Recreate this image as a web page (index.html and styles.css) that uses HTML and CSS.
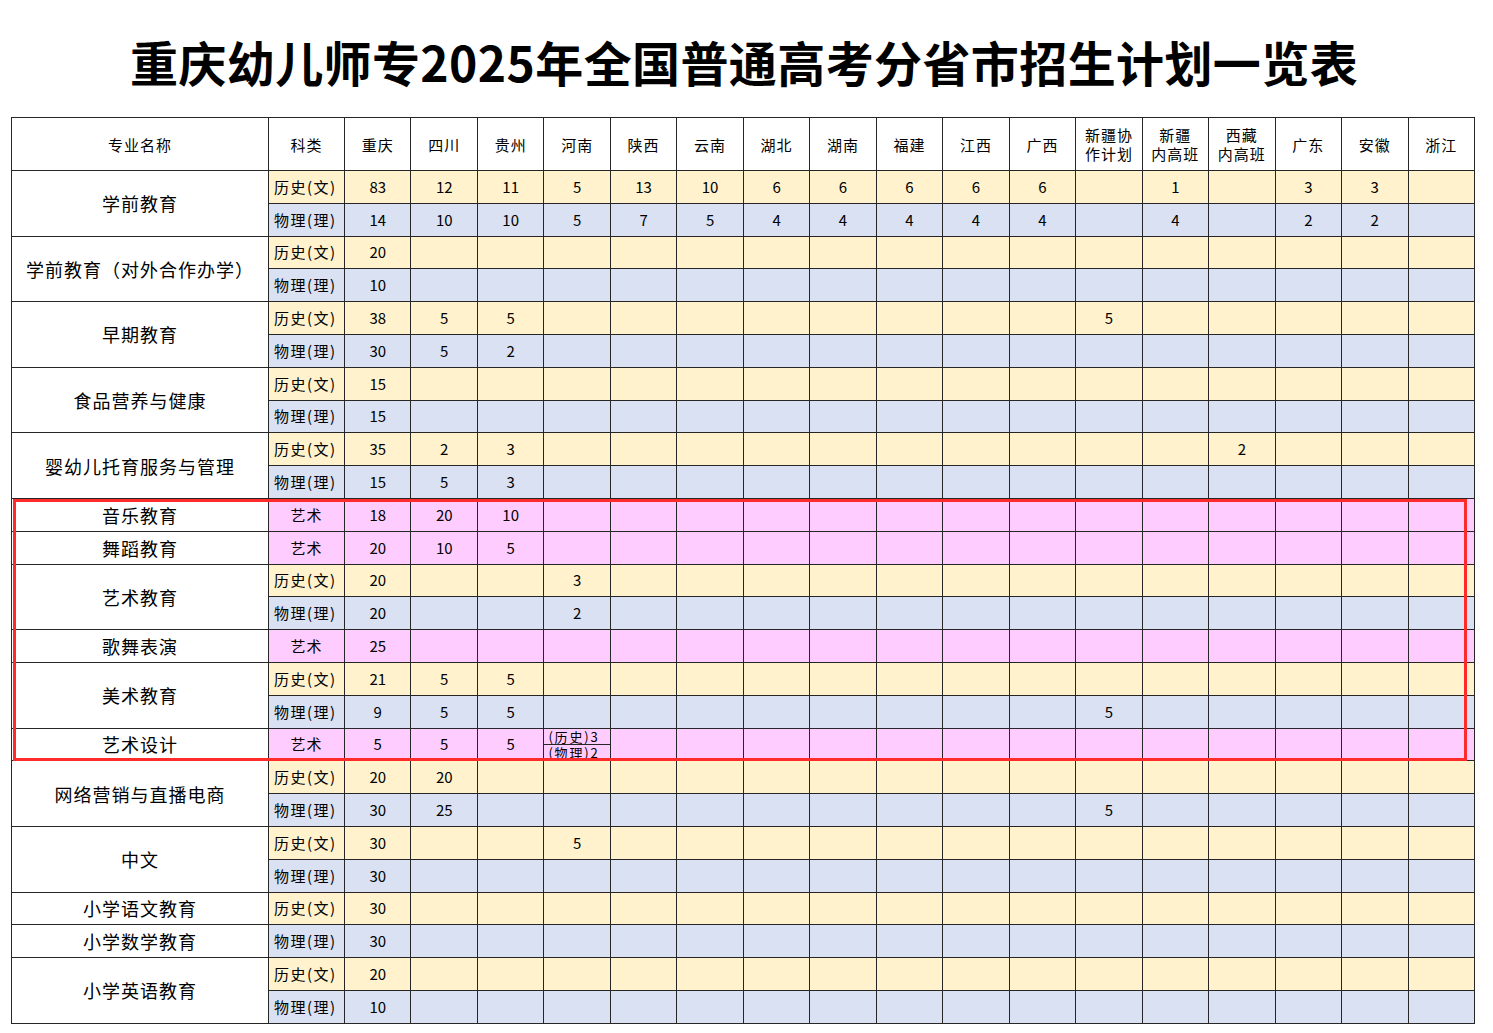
FILE: index.html
```html
<!DOCTYPE html>
<html lang="zh-CN">
<head>
<meta charset="utf-8">
<title>重庆幼儿师专2025年全国普通高考分省市招生计划一览表</title>
<link rel="stylesheet" href="styles.css">
</head>
<body>
<h1 class="title">重庆幼儿师专2025年全国普通高考分省市招生计划一览表</h1>
<div class="wrap">
<table class="plan">
<colgroup>
<col class="c-name"><col class="c-kind">
<col class="c-p"><col class="c-p"><col class="c-p"><col class="c-p"><col class="c-p"><col class="c-p"><col class="c-p"><col class="c-p"><col class="c-p"><col class="c-p"><col class="c-p"><col class="c-p"><col class="c-p"><col class="c-p"><col class="c-p"><col class="c-p"><col class="c-p">
</colgroup>
<thead>
<tr class="hd">
<th>专业名称</th><th>科类</th><th>重庆</th><th>四川</th><th>贵州</th><th>河南</th><th>陕西</th><th>云南</th><th>湖北</th><th>湖南</th><th>福建</th><th>江西</th><th>广西</th><th class="two">新疆协<br>作计划</th><th class="two">新疆<br>内高班</th><th class="two">西藏<br>内高班</th><th>广东</th><th>安徽</th><th>浙江</th>
</tr>
</thead>
<tbody>
<tr class="h"><td class="name" rowspan="2">学前教育</td><td class="k">历史(文)</td><td>83</td><td>12</td><td>11</td><td>5</td><td>13</td><td>10</td><td>6</td><td>6</td><td>6</td><td>6</td><td>6</td><td></td><td>1</td><td></td><td>3</td><td>3</td><td></td></tr>
<tr class="p"><td class="k">物理(理)</td><td>14</td><td>10</td><td>10</td><td>5</td><td>7</td><td>5</td><td>4</td><td>4</td><td>4</td><td>4</td><td>4</td><td></td><td>4</td><td></td><td>2</td><td>2</td><td></td></tr>

<tr class="h"><td class="name" rowspan="2">学前教育（对外合作办学）</td><td class="k">历史(文)</td><td>20</td><td></td><td></td><td></td><td></td><td></td><td></td><td></td><td></td><td></td><td></td><td></td><td></td><td></td><td></td><td></td><td></td></tr>
<tr class="p"><td class="k">物理(理)</td><td>10</td><td></td><td></td><td></td><td></td><td></td><td></td><td></td><td></td><td></td><td></td><td></td><td></td><td></td><td></td><td></td><td></td></tr>

<tr class="h"><td class="name" rowspan="2">早期教育</td><td class="k">历史(文)</td><td>38</td><td>5</td><td>5</td><td></td><td></td><td></td><td></td><td></td><td></td><td></td><td></td><td>5</td><td></td><td></td><td></td><td></td><td></td></tr>
<tr class="p"><td class="k">物理(理)</td><td>30</td><td>5</td><td>2</td><td></td><td></td><td></td><td></td><td></td><td></td><td></td><td></td><td></td><td></td><td></td><td></td><td></td><td></td></tr>

<tr class="h"><td class="name" rowspan="2">食品营养与健康</td><td class="k">历史(文)</td><td>15</td><td></td><td></td><td></td><td></td><td></td><td></td><td></td><td></td><td></td><td></td><td></td><td></td><td></td><td></td><td></td><td></td></tr>
<tr class="p"><td class="k">物理(理)</td><td>15</td><td></td><td></td><td></td><td></td><td></td><td></td><td></td><td></td><td></td><td></td><td></td><td></td><td></td><td></td><td></td><td></td></tr>

<tr class="h"><td class="name" rowspan="2">婴幼儿托育服务与管理</td><td class="k">历史(文)</td><td>35</td><td>2</td><td>3</td><td></td><td></td><td></td><td></td><td></td><td></td><td></td><td></td><td></td><td></td><td>2</td><td></td><td></td><td></td></tr>
<tr class="p"><td class="k">物理(理)</td><td>15</td><td>5</td><td>3</td><td></td><td></td><td></td><td></td><td></td><td></td><td></td><td></td><td></td><td></td><td></td><td></td><td></td><td></td></tr>

<tr class="a"><td class="name">音乐教育</td><td class="k ka">艺术</td><td>18</td><td>20</td><td>10</td><td></td><td></td><td></td><td></td><td></td><td></td><td></td><td></td><td></td><td></td><td></td><td></td><td></td><td></td></tr>
<tr class="a"><td class="name">舞蹈教育</td><td class="k ka">艺术</td><td>20</td><td>10</td><td>5</td><td></td><td></td><td></td><td></td><td></td><td></td><td></td><td></td><td></td><td></td><td></td><td></td><td></td><td></td></tr>

<tr class="h"><td class="name" rowspan="2">艺术教育</td><td class="k">历史(文)</td><td>20</td><td></td><td></td><td>3</td><td></td><td></td><td></td><td></td><td></td><td></td><td></td><td></td><td></td><td></td><td></td><td></td><td></td></tr>
<tr class="p"><td class="k">物理(理)</td><td>20</td><td></td><td></td><td>2</td><td></td><td></td><td></td><td></td><td></td><td></td><td></td><td></td><td></td><td></td><td></td><td></td><td></td></tr>

<tr class="a"><td class="name">歌舞表演</td><td class="k ka">艺术</td><td>25</td><td></td><td></td><td></td><td></td><td></td><td></td><td></td><td></td><td></td><td></td><td></td><td></td><td></td><td></td><td></td><td></td></tr>

<tr class="h"><td class="name" rowspan="2">美术教育</td><td class="k">历史(文)</td><td>21</td><td>5</td><td>5</td><td></td><td></td><td></td><td></td><td></td><td></td><td></td><td></td><td></td><td></td><td></td><td></td><td></td><td></td></tr>
<tr class="p"><td class="k">物理(理)</td><td>9</td><td>5</td><td>5</td><td></td><td></td><td></td><td></td><td></td><td></td><td></td><td></td><td>5</td><td></td><td></td><td></td><td></td><td></td></tr>

<tr class="a"><td class="name">艺术设计</td><td class="k ka">艺术</td><td>5</td><td>5</td><td>5</td><td class="split"><div class="sp-top">(历史)3</div><div class="sp-bot">(物理)2</div></td><td></td><td></td><td></td><td></td><td></td><td></td><td></td><td></td><td></td><td></td><td></td><td></td><td></td></tr>

<tr class="h"><td class="name" rowspan="2">网络营销与直播电商</td><td class="k">历史(文)</td><td>20</td><td>20</td><td></td><td></td><td></td><td></td><td></td><td></td><td></td><td></td><td></td><td></td><td></td><td></td><td></td><td></td><td></td></tr>
<tr class="p"><td class="k">物理(理)</td><td>30</td><td>25</td><td></td><td></td><td></td><td></td><td></td><td></td><td></td><td></td><td></td><td>5</td><td></td><td></td><td></td><td></td><td></td></tr>

<tr class="h"><td class="name" rowspan="2">中文</td><td class="k">历史(文)</td><td>30</td><td></td><td></td><td>5</td><td></td><td></td><td></td><td></td><td></td><td></td><td></td><td></td><td></td><td></td><td></td><td></td><td></td></tr>
<tr class="p"><td class="k">物理(理)</td><td>30</td><td></td><td></td><td></td><td></td><td></td><td></td><td></td><td></td><td></td><td></td><td></td><td></td><td></td><td></td><td></td><td></td></tr>

<tr class="h"><td class="name">小学语文教育</td><td class="k">历史(文)</td><td>30</td><td></td><td></td><td></td><td></td><td></td><td></td><td></td><td></td><td></td><td></td><td></td><td></td><td></td><td></td><td></td><td></td></tr>
<tr class="p"><td class="name">小学数学教育</td><td class="k">物理(理)</td><td>30</td><td></td><td></td><td></td><td></td><td></td><td></td><td></td><td></td><td></td><td></td><td></td><td></td><td></td><td></td><td></td><td></td></tr>

<tr class="h"><td class="name" rowspan="2">小学英语教育</td><td class="k">历史(文)</td><td>20</td><td></td><td></td><td></td><td></td><td></td><td></td><td></td><td></td><td></td><td></td><td></td><td></td><td></td><td></td><td></td><td></td></tr>
<tr class="p"><td class="k">物理(理)</td><td>10</td><td></td><td></td><td></td><td></td><td></td><td></td><td></td><td></td><td></td><td></td><td></td><td></td><td></td><td></td><td></td><td></td></tr>
</tbody>
</table>
<div class="highlight"></div>
</div>
</body>
</html>
```

FILE: styles.css
```css
html, body {
  margin: 0;
  padding: 0;
  background: #ffffff;
}

body {
  font-family: "Noto Sans CJK SC", "Noto Sans", sans-serif;
  color: #000000;
}

.title {
  margin: 0;
  height: 117px;
  box-sizing: border-box;
  padding-top: 4px;
  padding-right: 5px;
  display: flex;
  align-items: center;
  justify-content: center;
  font-size: 48px;
  font-weight: 700;
  letter-spacing: 0.4px;
  color: #000000;
}

.wrap {
  position: relative;
  margin-left: 11px;
  width: 1463px;
}

.plan {
  border-collapse: collapse;
  table-layout: fixed;
  width: 1463px;
}

.c-name { width: 257px; }
.c-kind { width: 76px; }
.c-p { width: 66.47px; }

.plan th,
.plan td {
  border: 1px solid #262626;
  padding: 0;
  text-align: center;
  vertical-align: middle;
  font-size: 15px;
  line-height: 18px;
  font-weight: 400;
  white-space: nowrap;
  overflow: hidden;
}

.plan th {
  background: #ffffff;
  font-size: 15px;
  line-height: 19px;
  letter-spacing: 1px;
}

.hd { height: 53px; }

.plan tbody tr { height: 32.8px; }

.h td { background: #fff2cc; }
.p td { background: #d9e1f2; }
.a td { background: #ffccff; }

.plan td.name {
  background: #ffffff;
  font-size: 18px;
  line-height: 22px;
  letter-spacing: 1px;
}

.plan td.k {
  text-align: left;
  padding-left: 5px;
  letter-spacing: 1.5px;
}

.plan td.ka {
  text-align: center;
  padding-left: 0;
  letter-spacing: 1px;
}

.plan td.split {
  padding: 0;
  vertical-align: middle;
}

.sp-top,
.sp-bot {
  height: 15px;
  line-height: 15px;
  font-size: 13px;
  letter-spacing: 1.8px;
  text-align: left;
  padding-left: 4px;
}

.sp-top {
  border-bottom: 1px solid #262626;
}

.highlight {
  position: absolute;
  left: 2px;
  top: 382px;
  width: 1454px;
  height: 262px;
  box-sizing: border-box;
  border: 3px solid #ff2a2a;
  pointer-events: none;
}
```
